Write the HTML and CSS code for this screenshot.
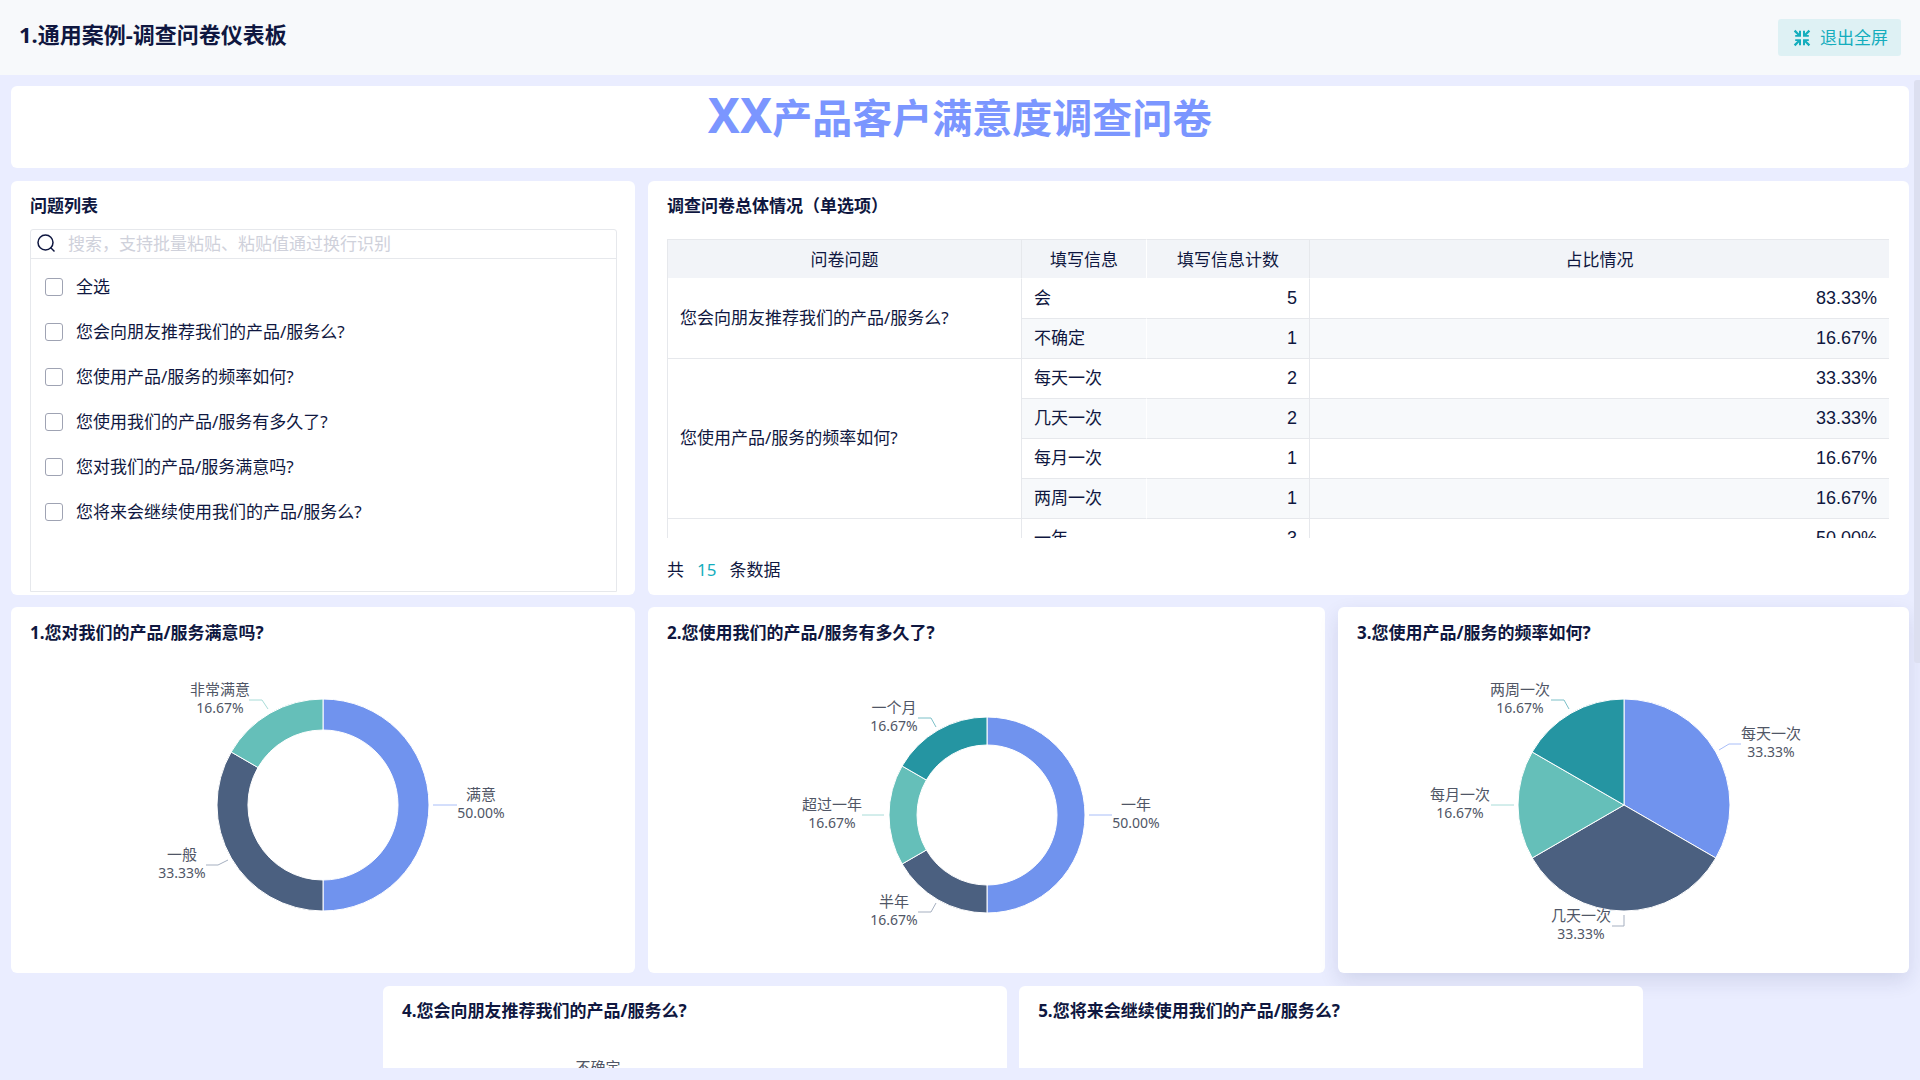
FILE: index.html
```html
<!DOCTYPE html>
<html lang="zh-CN">

<head>
    <meta charset="UTF-8">
    <meta name="viewport" content="width=device-width, initial-scale=1.0">
    <title>通用案例-调查问卷仪表板</title>
    <link rel="stylesheet" href="styles.css">
</head>

<body>
    <header class="topbar">
        <h1 class="topbar-title">1.通用案例-调查问卷仪表板</h1>
        <button type="button" class="exit-btn">
            <svg width="18" height="18" viewBox="0 0 18 18" fill="currentColor">
                <path d="M8 7.8H2.2V6h2.2L.8 2.4 2.4.8 6 4.4V1.8h2z" />
                <path d="M10 7.8h5.8V6h-2.2l3.6-3.6L15.6.8 12 4.4V1.8h-2z" />
                <path d="M8 10.2H2.2V12h2.2L.8 15.6l1.6 1.6L6 13.6v2.6h2z" />
                <path d="M10 10.2h5.8V12h-2.2l3.6 3.6-1.6 1.6-3.6-3.6v2.6h-2z" />
            </svg>
            <span>退出全屏</span>
        </button>
    </header>

    <main class="board">
        <div class="board-view">
            <section class="card banner">
                <h2 class="banner-title"><span class="cross">XX</span>产品客户满意度调查问卷</h2>
            </section>

            <div class="row row-overview">
                <!-- question filter -->
                <section class="card filter-card">
                    <h3 class="card-title">问题列表</h3>
                    <div class="filter">
                        <div class="search">
                            <svg width="20" height="20" viewBox="0 0 20 20" fill="none" stroke="currentColor" stroke-width="1.5">
                                <circle cx="9.5" cy="9.5" r="7.5" />
                                <path d="M14.5 14.5l4 4" />
                            </svg>
                            <input type="text" class="search-input" aria-label="搜索" placeholder="搜索，支持批量粘贴、粘贴值通过换行识别">
                        </div>
                        <div class="options">
                            <label class="option"><input type="checkbox">全选</label>
                            <label class="option"><input type="checkbox">您会向朋友推荐我们的产品/服务么?</label>
                            <label class="option"><input type="checkbox">您使用产品/服务的频率如何?</label>
                            <label class="option"><input type="checkbox">您使用我们的产品/服务有多久了?</label>
                            <label class="option"><input type="checkbox">您对我们的产品/服务满意吗?</label>
                            <label class="option"><input type="checkbox">您将来会继续使用我们的产品/服务么?</label>
                        </div>
                    </div>
                </section>

                <!-- summary table -->
                <section class="card table-card">
                    <h3 class="card-title">调查问卷总体情况（单选项）</h3>
                    <div class="table-view">
                        <table class="summary">
                            <colgroup>
                                <col class="col-question">
                                <col class="col-answer">
                                <col class="col-count">
                                <col>
                            </colgroup>
                            <thead>
                                <tr>
                                    <th>问卷问题</th>
                                    <th>填写信息</th>
                                    <th>填写信息计数</th>
                                    <th>占比情况</th>
                                </tr>
                            </thead>
                            <tbody>
                                <tr>
                                    <td class="question" rowspan="2">您会向朋友推荐我们的产品/服务么?</td>
                                    <td>会</td>
                                    <td class="num">5</td>
                                    <td class="num">83.33%</td>
                                </tr>
                                <tr class="striped">
                                    <td>不确定</td>
                                    <td class="num">1</td>
                                    <td class="num">16.67%</td>
                                </tr>
                                <tr>
                                    <td class="question" rowspan="4">您使用产品/服务的频率如何?</td>
                                    <td>每天一次</td>
                                    <td class="num">2</td>
                                    <td class="num">33.33%</td>
                                </tr>
                                <tr class="striped">
                                    <td>几天一次</td>
                                    <td class="num">2</td>
                                    <td class="num">33.33%</td>
                                </tr>
                                <tr>
                                    <td>每月一次</td>
                                    <td class="num">1</td>
                                    <td class="num">16.67%</td>
                                </tr>
                                <tr class="striped">
                                    <td>两周一次</td>
                                    <td class="num">1</td>
                                    <td class="num">16.67%</td>
                                </tr>
                                <tr>
                                    <td class="question"></td>
                                    <td>一年</td>
                                    <td class="num">3</td>
                                    <td class="num">50.00%</td>
                                </tr>
                            </tbody>
                        </table>
                    </div>
                    <p class="total">共<span class="total-num">15</span>条数据</p>
                </section>
            </div>

            <div class="row row-charts">
                <section class="card chart-card">
                    <h3 class="card-title">1.您对我们的产品/服务满意吗?</h3>
                    <svg class="chart" width="560" height="320" viewBox="-280 -160 560 320">
                        <g class="slices">
                            <path class="blue" d="M0 -106A106 106 0 0 1 0 106V75A75 75 0 0 0 0 -75Z" />
                            <path class="navy" d="M0 106A106 106 0 0 1 -91.8 -53L-65 -37.5A75 75 0 0 0 0 75Z" />
                            <path class="mint" d="M-91.8 -53A106 106 0 0 1 0 -106V-75A75 75 0 0 0 -65 -37.5Z" />
                        </g>
                        <g class="leaders">
                            <path class="blue" d="M110 0H134" />
                            <path class="navy" d="M-95 55L-105 60H-117" />
                            <path class="mint" d="M-55 -96L-61 -105H-74" />
                        </g>
                        <g class="labels">
                            <text x="158" y="-5">满意</text>
                            <text class="pct" x="158" y="13">50.00%</text>
                            <text x="-141" y="55">一般</text>
                            <text class="pct" x="-141" y="73">33.33%</text>
                            <text x="-103" y="-110">非常满意</text>
                            <text class="pct" x="-103" y="-92">16.67%</text>
                        </g>
                    </svg>
                </section>

                <section class="card chart-card">
                    <h3 class="card-title">2.您使用我们的产品/服务有多久了?</h3>
                    <svg class="chart" width="560" height="320" viewBox="-280 -170 560 320">
                        <g class="slices">
                            <path class="blue" d="M0 -98A98 98 0 0 1 0 98V70A70 70 0 0 0 0 -70Z" />
                            <path class="navy" d="M0 98A98 98 0 0 1 -84.9 49L-60.6 35A70 70 0 0 0 0 70Z" />
                            <path class="mint" d="M-84.9 49A98 98 0 0 1 -84.9 -49L-60.6 -35A70 70 0 0 0 -60.6 35Z" />
                            <path class="teal" d="M-84.9 -49A98 98 0 0 1 0 -98V-70A70 70 0 0 0 -60.6 -35Z" />
                        </g>
                        <g class="leaders">
                            <path class="blue" d="M102 0H125" />
                            <path class="navy" d="M-51 88L-56 97H-69" />
                            <path class="mint" d="M-103 0H-125" />
                            <path class="teal" d="M-51 -88L-56 -97H-69" />
                        </g>
                        <g class="labels">
                            <text x="149" y="-5">一年</text>
                            <text class="pct" x="149" y="13">50.00%</text>
                            <text x="-93" y="92">半年</text>
                            <text class="pct" x="-93" y="110">16.67%</text>
                            <text x="-155" y="-5">超过一年</text>
                            <text class="pct" x="-155" y="13">16.67%</text>
                            <text x="-93" y="-102">一个月</text>
                            <text class="pct" x="-93" y="-84">16.67%</text>
                        </g>
                    </svg>
                </section>

                <section class="card chart-card raised">
                    <h3 class="card-title">3.您使用产品/服务的频率如何?</h3>
                    <svg class="chart" width="560" height="320" viewBox="-280 -160 560 320">
                        <g class="slices">
                            <path class="blue" d="M0 0V-106A106 106 0 0 1 91.8 53Z" />
                            <path class="navy" d="M0 0L91.8 53A106 106 0 0 1 -91.8 53Z" />
                            <path class="mint" d="M0 0L-91.8 53A106 106 0 0 1 -91.8 -53Z" />
                            <path class="teal" d="M0 0L-91.8 -53A106 106 0 0 1 0 -106Z" />
                        </g>
                        <g class="leaders">
                            <path class="blue" d="M95 -55L105 -61H117" />
                            <path class="navy" d="M0 110V121H-12" />
                            <path class="mint" d="M-110 0H-133" />
                            <path class="teal" d="M-55 -96L-60 -105H-73" />
                        </g>
                        <g class="labels">
                            <text x="147" y="-66">每天一次</text>
                            <text class="pct" x="147" y="-48">33.33%</text>
                            <text x="-43" y="116">几天一次</text>
                            <text class="pct" x="-43" y="134">33.33%</text>
                            <text x="-164" y="-5">每月一次</text>
                            <text class="pct" x="-164" y="13">16.67%</text>
                            <text x="-104" y="-110">两周一次</text>
                            <text class="pct" x="-104" y="-92">16.67%</text>
                        </g>
                    </svg>
                </section>
            </div>

            <div class="row row-more">
                <section class="card chart-card">
                    <h3 class="card-title">4.您会向朋友推荐我们的产品/服务么?</h3>
                    <svg class="chart" width="560" height="320" viewBox="-280 -160 560 320">
                        <g class="slices">
                            <path class="blue" d="M0 -106A106 106 0 1 1 -91.8 -53L-65 -37.5A75 75 0 1 0 0 -75Z" />
                            <path class="navy" d="M-91.8 -53A106 106 0 0 1 0 -106V-75A75 75 0 0 0 -65 -37.5Z" />
                        </g>
                        <g class="labels">
                            <text x="-97" y="-110">不确定</text>
                        </g>
                    </svg>
                </section>

                <section class="card chart-card">
                    <h3 class="card-title">5.您将来会继续使用我们的产品/服务么?</h3>
                </section>
            </div>
        </div>
        <div class="scroll-thumb"></div>
    </main>
</body>

</html>
```

FILE: styles.css
```css
* {
    box-sizing: border-box;
}

body {
    margin: 0;
    height: 100vh;
    display: flex;
    flex-direction: column;
    overflow: hidden;
    font-family: "Noto Sans", "Noto Sans CJK SC", sans-serif;
    font-size: 17px;
    line-height: 24px;
    color: #0f1740;
    background-color: #eaedff;
}

h1,
h2,
h3,
p {
    margin: 0;
}

/* top bar */
.topbar {
    display: flex;
    justify-content: space-between;
    align-items: flex-start;
    flex: none;
    height: 75px;
    padding: 19px 19px 0;
    background-color: #f7f9fb;
}

.topbar-title {
    font-size: 22px;
    line-height: 30px;
    font-weight: bold;
}

.exit-btn {
    display: flex;
    align-items: center;
    gap: 9px;
    height: 37px;
    padding: 0 13px 0 15px;
    border: none;
    border-radius: 3px;
    background-color: #def1f4;
    color: #14adbd;
    font-family: inherit;
    font-size: 17px;
    line-height: 24px;
    cursor: pointer;
}

/* board */
.board {
    position: relative;
    flex: 1;
    min-height: 0;
    padding: 11px 11px 12px;
}

.board-view {
    height: 100%;
    display: flex;
    flex-direction: column;
    gap: 13px;
    overflow: hidden;
    /* leave room for the card shadows */
    margin: 0 -11px;
    padding: 0 11px;
}

.scroll-thumb {
    position: absolute;
    top: 5px;
    right: 0;
    width: 6px;
    height: 583px;
    border-radius: 3px 0 0 3px;
    background-color: #dcdff0;
}

.row {
    display: grid;
    flex: none;
    gap: 13px;
}

.row-overview {
    grid-template-columns: 624fr 1261fr;
    height: 414px;
}

.row-charts {
    grid-template-columns: 624fr 677fr 571fr;
    margin-top: -1px;
}

.row-more {
    grid-template-columns: 1fr 1fr;
    gap: 12px;
    padding: 0 14% 0 372px;
}

.card {
    display: flex;
    flex-direction: column;
    min-width: 0;
    border-radius: 6px;
    background-color: #fff;
}

.card-title {
    font-size: 17px;
    line-height: 24px;
    font-weight: bold;
}

.banner {
    flex: none;
    height: 82px;
    text-align: center;
}

.banner-title {
    font-size: 40px;
    line-height: 64px;
    color: #7b96ff;
}

.cross {
    font-size: 48px;
    line-height: 1;
}

/* question filter */
.filter-card {
    padding: 13px 18px 3px 19px;
}

.filter {
    flex: 1;
    display: flex;
    flex-direction: column;
    margin-top: 11px;
    border: 1px solid #e6e8ec;
    border-radius: 3px 3px 0 0;
}

.search {
    display: flex;
    align-items: center;
    gap: 12px;
    height: 29px;
    padding: 0 5px 2px;
    border-bottom: 1px solid #e6e8ec;
}

.search-input {
    flex: 1;
    height: 26px;
    padding: 0;
    border: none;
    outline: none;
    background: none;
    font-family: inherit;
    font-size: 17px;
    color: inherit;
}

.search-input::placeholder {
    color: #cfd1db;
}

.options {
    padding: 5px 14px;
}

.option {
    display: flex;
    align-items: center;
    gap: 13px;
    height: 45px;
}

.option input {
    appearance: none;
    width: 18px;
    height: 18px;
    margin: 0;
    border: 1px solid #9fa3b3;
    border-radius: 3px;
    background-color: #fff;
}

/* summary table */
.table-card {
    padding: 13px 20px 0 19px;
}

.table-view {
    height: 299px;
    margin-top: 21px;
    overflow: hidden;
}

.summary {
    width: 100%;
    table-layout: fixed;
    border-collapse: separate;
    border-spacing: 0;
    border-left: 1px solid #e6e8ec;
}

.col-question {
    width: 29%;
}

.col-answer {
    width: 125px;
}

.col-count {
    width: 163px;
}

.summary th {
    height: 40px;
    padding: 2px 0 0;
    border-top: 1px solid #e6e8ec;
    border-bottom: 1px solid #fff;
    background-color: #f2f4f8;
    font-weight: normal;
}

.summary td {
    height: 40px;
    padding: 0 12px 2px;
    border-bottom: 1px solid #e6e8ec;
}

.summary th:not(:last-child) {
    border-right: 1px solid #e6e8ec;
}

.summary th:nth-child(2) {
    border-right-color: #fff;
}

.summary .question,
.summary td:nth-last-child(2) {
    border-right: 1px solid #e6e8ec;
}

.summary td:nth-last-child(3) {
    border-right: 1px solid #fff;
}

.striped td {
    background-color: #f7f9fb;
}

.num {
    font-family: "Liberation Sans", Arial, sans-serif;
    font-size: 18px;
    text-align: right;
}

.total {
    margin-top: 20px;
}

.total-num {
    margin: 0 13px;
    color: #14adbd;
}

/* charts */
.chart-card {
    height: 366px;
    padding: 14px 19px 0;
}

.row-more .chart-card {
    padding-top: 13px;
}

.chart {
    display: block;
    align-self: center;
    flex: none;
    overflow: visible;
}

.raised {
    box-shadow: 0 8px 20px rgba(30, 40, 100, 0.12);
}

.slices path {
    stroke: #fff;
    stroke-width: 1;
}

.slices .blue {
    fill: #7093ee;
}

.slices .navy {
    fill: #4b6080;
}

.slices .mint {
    fill: #65bfb9;
}

.slices .teal {
    fill: #2595a2;
}

.leaders path {
    fill: none;
    stroke-width: 1;
}

.leaders .blue {
    stroke: #a9bef8;
}

.leaders .navy {
    stroke: #a5afc0;
}

.leaders .mint {
    stroke: #a8dcd8;
}

.leaders .teal {
    stroke: #7cc0c8;
}

.labels {
    font-size: 15px;
    text-anchor: middle;
    fill: #505666;
}

.pct {
    font-size: 14px;
}
```
